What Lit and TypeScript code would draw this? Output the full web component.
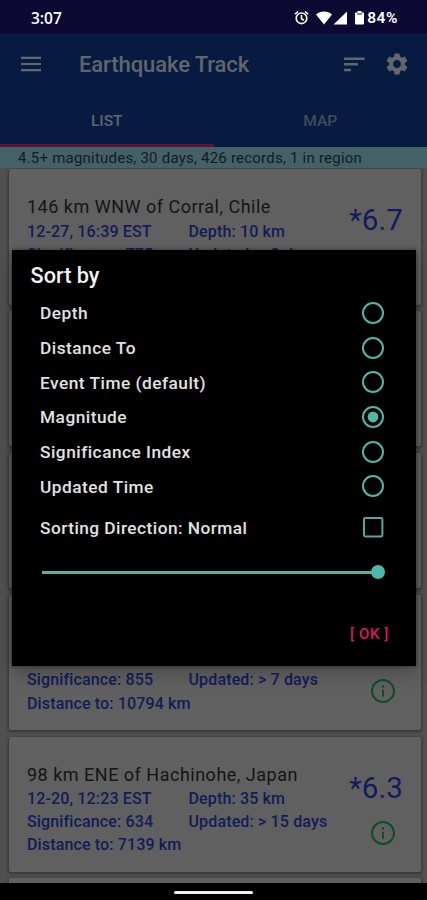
import { LitElement, html, css, svg } from "lit";
import { customElement, property } from "lit/decorators.js";

interface Quake {
  place: string;
  time: string;
  depth: string;
  significance: string;
  updated: string;
  distance: string;
  magnitude: string;
}

const blank: Quake = { place: "", time: "", depth: "", significance: "", updated: "", distance: "", magnitude: "" };

const quakes: Quake[] = [
  { ...blank, place: "146 km WNW of Corral, Chile", time: "12-27, 16:39 EST", depth: "10 km", significance: "775", updated: "> 8 days", magnitude: "*6.7" },
  blank,
  blank,
  { ...blank, significance: "855", updated: "> 7 days", distance: "10794 km" },
  { place: "98 km ENE of Hachinohe, Japan", time: "12-20, 12:23 EST", depth: "35 km", significance: "634", updated: "> 15 days", distance: "7139 km", magnitude: "*6.3" },
  blank,
];

@customElement("quake-card")
class QuakeCard extends LitElement {
  @property({ attribute: false }) quake!: Quake;

  static styles = css`
    :host {
      display: flex;
      box-sizing: border-box;
      flex: none;
      height: 135.5px;
      padding: 25px 0 0 18px;
      background: #606060;
      border-radius: 2px;
      box-shadow: 0 1px 3px 1px rgba(0, 0, 0, 0.32);
    }
    .details { width: 317px; flex: none; }
    .place {
      height: 25.5px;
      line-height: 25px;
      font-size: 18px;
      letter-spacing: 0.5px;
      color: #151515;
      white-space: nowrap;
    }
    .facts {
      display: grid;
      grid-template-columns: 161.5px 1fr;
      grid-auto-rows: 23.2px;
      line-height: 23px;
      font-size: 16px;
      font-weight: 500;
      letter-spacing: 0.14px;
      color: #101d58;
      white-space: nowrap;
    }
    .side {
      display: flex;
      flex-direction: column;
      align-items: flex-start;
      width: 77px;
    }
    .mag {
      height: 52px;
      line-height: 53px;
      margin-left: 5px;
      font-size: 29.5px;
      letter-spacing: 0.1px;
      color: #101d5c;
    }
    .info { margin: 6px 0 0 25.500px; width: 26px; height: 26px; }
  `;

  render() {
    const q = this.quake;
    return html`
      <div class="details">
        <div class="place">${q.place}</div>
        ${q.significance
          ? html`<div class="facts">
              <span>${q.time}</span><span>${q.depth ? `Depth: ${q.depth}` : ""}</span>
              <span>Significance: ${q.significance}</span><span>Updated: ${q.updated}</span>
              ${q.distance ? html`<span>Distance to: ${q.distance}</span>` : ""}
            </div>`
          : ""}
      </div>
      ${q.significance
        ? html`<div class="side">
            <div class="mag">${q.magnitude}</div>
            <svg class="info" viewBox="0 0 26 26" fill="none" stroke="#0e4d2a" stroke-width="2">
              <circle cx="13" cy="13" r="11"></circle>
              <path d="M13 11.7v7M13 7.2v2.2"></path>
            </svg>
          </div>`
        : ""}
    `;
  }
}

@customElement("sort-dialog")
class SortDialog extends LitElement {
  static styles = css`
    :host {
      display: flex;
      flex-direction: column;
      box-sizing: border-box;
      width: 404px;
      height: 416px;
      padding: 12px 27px 0 18.5px;
      background: #000;
      color: #e2e2e2;
      box-shadow: 0 0 4px rgba(0, 0, 0, 0.5), 0 8px 16px rgba(0, 0, 0, 0.22);
    }
    .heading {
      height: 26px;
      line-height: 27px;
      margin-bottom: 7.5px;
      font-size: 21.7px;
      font-weight: 500;
      color: #f2f2f2;
    }
    .row {
      display: flex;
      align-items: center;
      justify-content: space-between;
      height: 34.7px;
      padding: 0 4px 0 9.5px;
      font-size: 17.3px;
      font-weight: 500;
      letter-spacing: 0.49px;
    }
    .row span { padding-top: 1px; }
    .row.direction { margin-top: 6.5px; letter-spacing: 0.46px; }
    .mark { width: 24px; height: 24px; }
    .slider {
      display: flex;
      align-items: center;
      height: 16px;
      margin: 19.5px 4px 0 11px;
    }
    .track { flex: 1; height: 3px; background: #52b2a6; }
    .thumb { width: 14px; height: 14px; margin-left: -7px; margin-right: 0; border-radius: 50%; background: #4cb8ab; }
    .ok {
      margin: 43px 0 0;
      align-self: flex-end;
      height: 22px;
      line-height: 22px;
      font-size: 15px;
      font-weight: 500;
      letter-spacing: 0.6px;
      color: #d81b60;
      white-space: pre;
    }
  `;

  private options = ["Depth", "Distance To", "Event Time (default)", "Magnitude", "Significance Index", "Updated Time"];
  private selected = "Magnitude";

  render() {
    return html`
      <div class="heading">Sort by</div>
      ${this.options.map(
        (o) => html`<div class="row">
          <span>${o}</span>
          <svg class="mark" viewBox="0 0 24 24" fill="none" stroke="#52b5a9" stroke-width="2">
            <circle cx="12" cy="12" r="10"></circle>
            ${o === this.selected ? svg`<circle cx="12" cy="12" r="5.4" fill="#52b5a9" stroke="none"></circle>` : ""}
          </svg>
        </div>`
      )}
      <div class="row direction">
        <span>Sorting Direction: Normal</span>
        <svg class="mark" viewBox="0 0 24 24" fill="none" stroke="#4fa99d" stroke-width="2">
          <rect x="3" y="3" width="18.4" height="18.4" rx="1.4"></rect>
        </svg>
      </div>
      <div class="slider"><div class="track"></div><div class="thumb"></div></div>
      <div class="ok">[ OK ]</div>
    `;
  }
}

@customElement("app-root")
class AppRoot extends LitElement {
  static styles = css`
    :host {
      display: flex;
      flex-direction: column;
      position: relative;
      width: 427px;
      height: 900px;
      overflow: hidden;
      background: #505050;
      font-family: Roboto, sans-serif;
    }
    .status {
      display: flex;
      align-items: center;
      flex: none;
      box-sizing: border-box;
      height: 34px;
      padding: 2px 29px 0 31px;
      background: #0c0a32;
      color: #fff;
    }
    .clock { flex: 1; font-family: "Open Sans", sans-serif; font-size: 15.5px; font-weight: 600; }
    .sysicons { width: 72px; height: 18px; margin-right: 1.500px; }
    .battery { font-size: 15.5px; font-weight: 600; letter-spacing: 0.55px; }
    .appbar {
      display: flex;
      align-items: center;
      flex: none;
      box-sizing: border-box;
      height: 61px;
      padding: 0 19px 0 19px;
      background: #071b41;
    }
    .icon { width: 24px; height: 24px; margin-top: -1px; fill: #63676d; }
    .title { flex: 1; margin-left: 36px; font-size: 22px; font-weight: 500; letter-spacing: -0.09px; color: #62666c; }
    .gear { width: 22px; height: 22px; margin-left: 20px; }
    .tabs { display: flex; flex: none; height: 52px; background: #071b41; }
    .tab {
      flex: 1;
      box-sizing: border-box;
      padding-top: 2px;
      border-bottom: 3px solid transparent;
      line-height: 48px;
      text-align: center;
      font-size: 15.5px;
      font-weight: 500;
      color: #3f4c58;
    }
    .tab.active { border-color: #611432; color: #60666b; }
    .summary {
      flex: none;
      height: 21px;
      padding-left: 18px;
      line-height: 22px;
      background: #446168;
      color: #101c21;
      font-size: 15px;
      letter-spacing: 0.22px;
    }
    .list {
      display: flex;
      flex-direction: column;
      gap: 6.4px;
      flex: 1;
      min-height: 0;
      overflow: hidden;
      padding: 1px 6px 0 9px;
    }
    .nav { display: flex; align-items: center; justify-content: center; flex: none; height: 17px; background: #000; }
    .pill { width: 79px; height: 3px; border-radius: 2px; background: #f2f2f2; margin-top: 2px; }
    .dialog { position: absolute; left: 12px; top: 250px; }
  `;

  render() {
    return html`
      <div class="status">
        <span class="clock">3:07</span>
        <svg class="sysicons" viewBox="0 0 72 18" fill="#fff">
          <g fill="none" stroke="#fff" stroke-width="1.6">
            <circle cx="7.5" cy="9.3" r="5.3"></circle>
            <path d="M7.5 6v3.7l2.4 1.5M1 5.2l3-2.7M14 5.2l-3-2.7"></path>
          </g>
          <path d="M22 5.5C26.500 1.400 33.500 1.400 38 5.500L30 15.500Z"></path>
          <path d="M53 2.500V15.500H39.500Z"></path>
          <path d="M63.500 2h4v1.500h1.500a1 1 0 0 1 1 1V14.500a1 1 0 0 1-1 1h-7a1 1 0 0 1-1-1V4.500a1 1 0 0 1 1-1h1.500Z"></path>
          <path d="M63 5h5" stroke="#0c0a32" stroke-width="1"></path>
        </svg>
        <span class="battery">84%</span>
      </div>
      <div class="appbar">
        <svg class="icon" viewBox="0 0 24 24"><path d="M2 4.700h20v2.200H2zM2 10.900h20v2.200H2zM2 17.100h20v2.200H2z"></path></svg>
        <span class="title">Earthquake Track</span>
        <svg class="icon" viewBox="0 0 24 24"><path d="M2 5.400h20.500v2.500H2zM2 11h14v2.500H2zM2 16.700h7v2.500H2z"></path></svg>
        <svg class="icon gear" viewBox="2 2 20 20"><path d="M19.140 12.940c.04-.3.060-.61.060-.94 0-.32-.02-.64-.07-.94l2.030-1.580c.18-.14.230-.41.120-.61l-1.920-3.320c-.12-.22-.37-.29-.59-.22l-2.390.96c-.5-.38-1.030-.7-1.620-.94l-.36-2.540c-.04-.24-.24-.41-.48-.41h-3.840c-.24 0-.43.170-.47.410l-.36 2.540c-.59.240-1.130.57-1.620.94l-2.390-.96c-.22-.08-.47 0-.59.220L2.740 8.870c-.12.210-.08.470.12.610l2.030 1.580c-.05.3-.09.63-.09.940s.02.640.07.940l-2.030 1.580c-.18.140-.23.410-.12.610l1.920 3.320c.12.220.37.290.59.220l2.390-.96c.5.380 1.030.7 1.620.94l.36 2.540c.05.240.24.410.48.410h3.840c.24 0 .44-.17.470-.41l.36-2.540c.59-.24 1.130-.56 1.620-.94l2.390.96c.22.080.47 0 .59-.22l1.920-3.320c.12-.22.070-.47-.12-.61l-2.010-1.580zM12 15.600c-1.980 0-3.600-1.620-3.600-3.600s1.620-3.600 3.600-3.600 3.600 1.620 3.600 3.600-1.620 3.600-3.600 3.600z"></path></svg>
      </div>
      <div class="tabs">
        <div class="tab active">LIST</div>
        <div class="tab">MAP</div>
      </div>
      <div class="summary">4.5+ magnitudes, 30 days, 426 records, 1 in region</div>
      <div class="list">${quakes.map((q) => html`<quake-card .quake=${q}></quake-card>`)}</div>
      <div class="nav"><div class="pill"></div></div>
      <sort-dialog class="dialog"></sort-dialog>
    `;
  }
}
